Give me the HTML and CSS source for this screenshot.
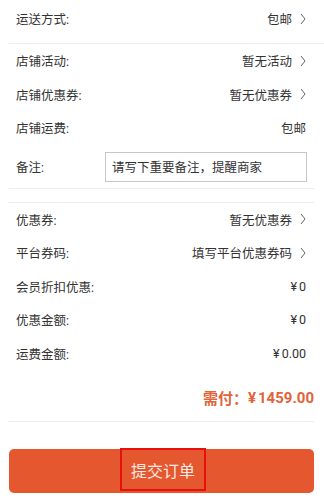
FILE: index.html
```html
<!DOCTYPE html>
<html lang="zh">
<head>
<meta charset="utf-8">
<link rel="stylesheet" href="styles.css">
</head>
<body>
<div class="page">
  <div class="row first">
    <span class="label">运送方式:</span>
    <span class="value">包邮<svg class="chev" viewBox="0 0 6 12" width="6" height="12"><polyline points="1,1 5,6 1,11"/></svg></span>
  </div>
  <div class="sep full"></div>
  <div class="row">
    <span class="label">店铺活动:</span>
    <span class="value">暂无活动<svg class="chev" viewBox="0 0 6 12" width="6" height="12"><polyline points="1,1 5,6 1,11"/></svg></span>
  </div>
  <div class="row">
    <span class="label">店铺优惠券:</span>
    <span class="value">暂无优惠券<svg class="chev" viewBox="0 0 6 12" width="6" height="12"><polyline points="1,1 5,6 1,11"/></svg></span>
  </div>
  <div class="row">
    <span class="label">店铺运费:</span>
    <span class="value">包邮</span>
  </div>
  <div class="remark">
    <span class="label">备注:</span>
    <div class="input">请写下重要备注，提醒商家</div>
  </div>
  <div class="sep"></div>
  <div class="gap"></div>
  <div class="sep"></div>
  <div class="row">
    <span class="label">优惠券:</span>
    <span class="value">暂无优惠券<svg class="chev" viewBox="0 0 6 12" width="6" height="12"><polyline points="1,1 5,6 1,11"/></svg></span>
  </div>
  <div class="row">
    <span class="label">平台券码:</span>
    <span class="value">填写平台优惠券码<svg class="chev" viewBox="0 0 6 12" width="6" height="12"><polyline points="1,1 5,6 1,11"/></svg></span>
  </div>
  <div class="row">
    <span class="label">会员折扣优惠:</span>
    <span class="value"><span class="yen">¥</span>0</span>
  </div>
  <div class="row">
    <span class="label">优惠金额:</span>
    <span class="value"><span class="yen">¥</span>0</span>
  </div>
  <div class="row">
    <span class="label">运费金额:</span>
    <span class="value"><span class="yen">¥</span>0.00</span>
  </div>
  <div class="total">需付：<span class="yen">¥</span>1459.00</div>
  <div class="sep"></div>
  <div class="btn-wrap">
    <div class="btn"><span class="btn-text">提交订单</span></div>
  </div>
</div>
</body>
</html>
```
FILE: styles.css
```css
html, body {
  margin: 0;
  padding: 0;
  background: #fff;
}
.page {
  width: 324px;
  font-family: Roboto, "Noto Sans CJK SC", sans-serif;
  font-size: 12px;
  color: #333;
}
.row {
  display: flex;
  justify-content: space-between;
  align-items: center;
  height: 33.5px;
  padding: 0 18px 0 16px;
}
.row.first {
  height: 37px;
  margin-bottom: 6px;
}
.label {
  font-size: 12.5px;
}
.value {
  display: flex;
  align-items: center;
  font-size: 12.5px;
}
.yen {
  margin-right: 2px;
}
.chev {
  margin-left: 8px;
  fill: none;
  stroke: #555;
  stroke-width: 0.9;
}
.sep {
  height: 1px;
  background: #ececec;
  margin: 0 10px 0 9px;
}
.sep.full {
  margin-right: 0;
}
.gap {
  height: 13px;
}
.remark {
  display: flex;
  align-items: center;
  padding: 7px 17px 6px 16px;
}
.remark .label {
  width: 89px;
  flex: none;
}
.input {
  flex: 1;
  height: 28px;
  border: 1px solid #c8c8c8;
  display: flex;
  align-items: center;
  padding-left: 6px;
  font-size: 12.5px;
  color: #333;
}
.total {
  height: 51px;
  display: flex;
  align-items: center;
  justify-content: flex-end;
  padding-right: 10px;
  padding-top: 4px;
  box-sizing: border-box;
  font-size: 15px;
  font-weight: bold;
  color: #e0643a;
}
.btn-wrap {
  padding: 27px 10px 0 9px;
}
.btn {
  height: 44px;
  background: #e5582f;
  border-radius: 5px;
  display: flex;
  justify-content: center;
}
.btn-text {
  box-sizing: border-box;
  width: 86px;
  height: 43px;
  margin-top: -1px;
  margin-left: 3px;
  border: 2px solid #e8100c;
  display: flex;
  align-items: center;
  justify-content: center;
  font-size: 16px;
  color: #fbe9e2;
}
```
